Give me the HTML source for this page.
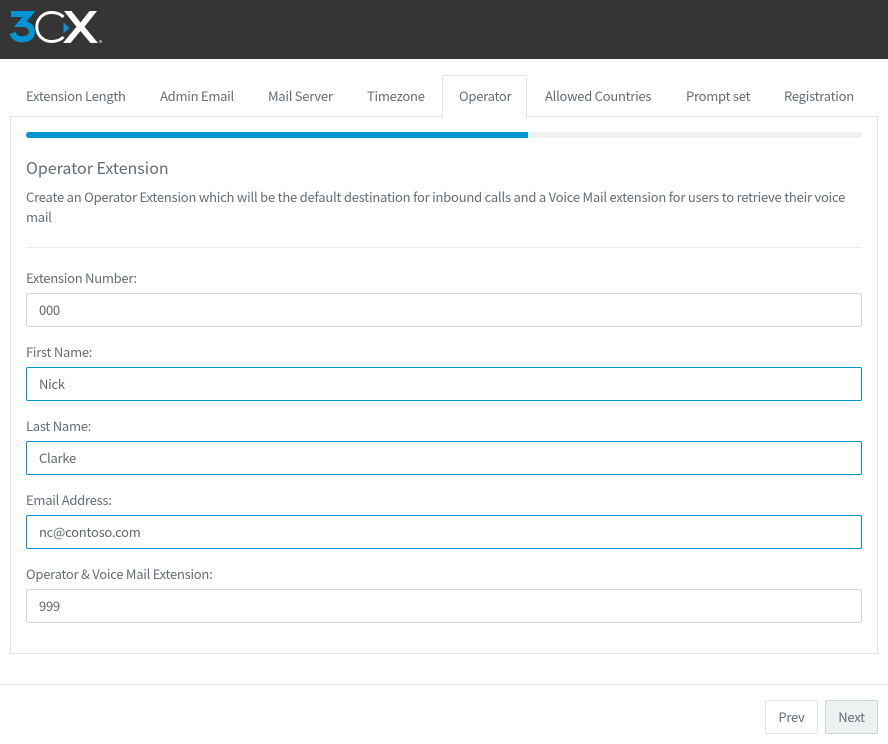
<!DOCTYPE html>
<html><head><meta charset="utf-8"><style>
html,body{margin:0;padding:0;background:#fff}
body{width:888px;height:744px;position:relative;overflow:hidden;font-family:"Noto Sans CJK SC","Noto Sans CJK JP","Liberation Sans",sans-serif;font-size:13px;letter-spacing:-0.25px;color:#646e75}
div,span{position:absolute;box-sizing:border-box}
.t{line-height:20px;white-space:nowrap}
.i{left:26px;width:836px;height:34px;border:1px solid #cfdadd;border-radius:2px;background:#fff;padding-left:12px;line-height:31px;color:#60686d}
.f{border-color:#0095cf}
.l{left:26px;line-height:20px;white-space:nowrap;color:#646e75}
</style></head><body>
<div style="left:0;top:0;width:888px;height:59px;background:#353535"></div>
<svg style="position:absolute;left:0;top:0" width="110" height="59" viewBox="0 0 110 59">
<path d="M11 14H29L20.500 24H23C28.500 24 32 27.500 32 32C32 36.500 28 39.300 22.500 39.300C17.500 39.300 14 37.500 12.500 33" fill="none" stroke="#0096d6" stroke-width="6"/>
<path d="M63.500 17C60.500 14 56.500 12.500 51.500 12.500C43 12.500 36.800 19 36.800 27C36.800 35 43 41.500 51.500 41.500C56.500 41.500 60.500 40 63.500 37" fill="none" stroke="#fff" stroke-width="3"/>
<path d="M63.500 22.500L69.500 28L63.500 33.500Z" fill="#0096d6"/>
<path d="M64 11H71.500L80.500 22.500L89.500 11H97L84.500 26.800L98 43H90.500L80.500 31L70.500 43H63L76.500 26.800Z" fill="#fff"/>
<circle cx="100.500" cy="41.500" r="1.500" fill="#9a9a9a"/>
</svg>

<div style="left:10px;top:116px;width:868px;height:538px;border:1px solid #dee5e7"></div>
<div style="left:442px;top:75px;width:85px;height:43px;border:1px solid #dee5e7;border-bottom:0;border-radius:2px 2px 0 0;background:#fff"></div>

<div class="t" style="left:26px;top:86px">Extension Length</div>
<div class="t" style="left:160px;top:86px">Admin Email</div>
<div class="t" style="left:268px;top:86px">Mail Server</div>
<div class="t" style="left:367px;top:86px">Timezone</div>
<div class="t" style="left:459px;top:86px">Operator</div>
<div class="t" style="left:545px;top:86px">Allowed Countries</div>
<div class="t" style="left:686px;top:86px">Prompt set</div>
<div class="t" style="left:784px;top:86px">Registration</div>

<div style="left:26px;top:132px;width:836px;height:6px;background:#edf1f2;border-radius:3px"></div>
<div style="left:26px;top:132px;width:502px;height:6px;background:#0095cf;border-radius:3px 0 0 3px"></div>

<div class="t" style="left:26px;top:157px;font-size:16px;letter-spacing:0;line-height:20px">Operator Extension</div>
<div class="t" style="left:26px;top:187px;letter-spacing:-0.215px">Create an Operator Extension which will be the default destination for inbound calls and a Voice Mail extension for users to retrieve their voice</div>
<div class="t" style="left:26px;top:207px">mail</div>
<div style="left:26px;top:247px;width:836px;height:1px;background:#e9eeef"></div>

<div class="l" style="top:268px">Extension Number:</div>
<div class="i" style="top:293px">000</div>
<div class="l" style="top:342px">First Name:</div>
<div class="i f" style="top:367px">Nick</div>
<div class="l" style="top:416px">Last Name:</div>
<div class="i f" style="top:441px">Clarke</div>
<div class="l" style="top:490px">Email Address:</div>
<div class="i f" style="top:515px">nc@contoso.com</div>
<div class="l" style="top:564px">Operator &amp; Voice Mail Extension:</div>
<div class="i" style="top:589px">999</div>

<div style="left:0;top:684px;width:888px;height:1px;background:#e4e8e9"></div>
<div style="left:765px;top:700px;width:53px;height:34px;border:1px solid #dee5e7;border-radius:2px;background:#fff;text-align:center;line-height:31px">Prev</div>
<div style="left:825px;top:700px;width:53px;height:34px;border:1px solid #c9d4d7;border-radius:2px;background:#edf1f2;text-align:center;line-height:31px">Next</div>
</body></html>
